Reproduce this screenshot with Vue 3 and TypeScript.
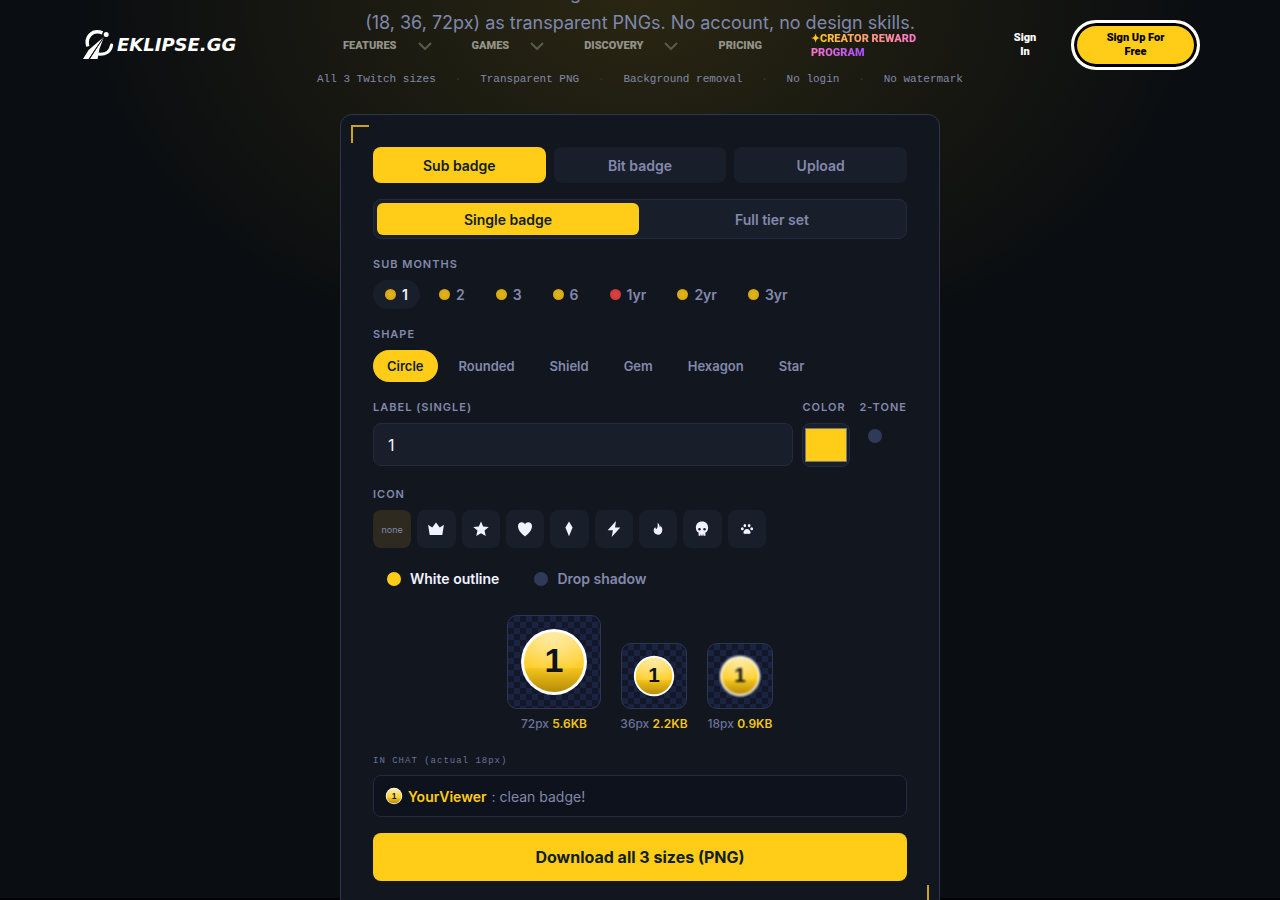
<script setup lang="ts">
import { ref } from 'vue'

interface Month { label: string; red?: boolean }
interface IconOption { name: string; path: string }
interface Preview { size: string; weight: string; kind: string }

const menus = ['FEATURES', 'GAMES', 'DISCOVERY']
const facts = ['All 3 Twitch sizes', 'Transparent PNG', 'Background removal', 'No login', 'No watermark']
const tabs = ['Sub badge', 'Bit badge', 'Upload']
const modes = ['Single badge', 'Full tier set']
const months: Month[] = [
  { label: '1' }, { label: '2' }, { label: '3' }, { label: '6' },
  { label: '1yr', red: true }, { label: '2yr' }, { label: '3yr' },
]
const shapes = ['Circle', 'Rounded', 'Shield', 'Gem', 'Hexagon', 'Star']
const icons: IconOption[] = [
  { name: 'Crown', path: 'M1.2 5.4 5.8 8.4 10 2.8 14.2 8.4 18.8 5.4 17 16.6H3Z' },
  { name: 'Star', path: 'M10 1.6 12.4 7.3 18.6 7.8 13.9 11.8 15.3 17.8 10 14.6 4.7 17.8 6.1 11.8 1.4 7.8 7.6 7.3Z' },
  { name: 'Heart', path: 'M10 18.4C6 15 2.2 11.6 2.2 6.8 2.2 4 4 2.4 6.4 2.4 8 2.4 9.4 3.2 10 4.8 10.6 3.2 12 2.4 13.6 2.4 16 2.4 17.8 4 17.8 6.8 17.8 11.6 14 15 10 18.4Z' },
  { name: 'Diamond', path: 'M10 1.8 14 8.2 10 18 6 8.2Z' },
  { name: 'Bolt', path: 'M12.2 1.2 3 11.4H8.8L7.4 18.8 17 8.4H11.2Z' },
  { name: 'Flame', path: 'M9.6 3C12 5 12 7 11.8 8.2 12.6 7.8 12.8 7 12.7 6.2 14.2 8 14.8 9.6 14.8 11 14.8 14.4 12.7 16.4 10 16.4 7.3 16.4 5.2 14.4 5.2 11.8 5.2 10 6.1 8.8 7 8 7.2 9.2 7.6 9.8 8.4 10 9.8 8.6 9.8 5.6 9.6 3Z' },
  { name: 'Skull', path: 'M10 1.8C14.4 1.8 16.8 4.8 16.8 8.6 16.8 11.8 15.4 13.2 13.8 14V17.6H11.6V16H10.8V17.6H9.2V16H8.4V17.6H6.2V14C4.6 13.2 3.2 11.8 3.2 8.6 3.2 4.8 5.6 1.8 10 1.8ZM7.2 8.8A1.5 1.5 0 1 0 7.2 11.8 1.5 1.5 0 1 0 7.2 8.8ZM12.8 8.8A1.5 1.5 0 1 0 12.8 11.8 1.5 1.5 0 1 0 12.8 8.8Z' },
  { name: 'Paw', path: 'M10 10C12.2 10 14 12.4 14 14 14 16 11.7 15.4 10 15.4 8.3 15.4 6 16 6 14 6 12.4 7.8 10 10 10ZM4.8 8A1.6 1.7 0 1 1 4.8 11.4 1.6 1.7 0 1 1 4.8 8ZM15.2 8A1.6 1.7 0 1 1 15.2 11.4 1.6 1.7 0 1 1 15.2 8ZM7.6 4.4A1.5 1.8 0 1 1 7.6 8 1.5 1.8 0 1 1 7.6 4.4ZM12.4 4.4A1.5 1.8 0 1 1 12.4 8 1.5 1.8 0 1 1 12.4 4.4Z' },
]
const previews: Preview[] = [
  { size: '72px', weight: '5.6KB', kind: 'large' },
  { size: '36px', weight: '2.2KB', kind: 'medium' },
  { size: '18px', weight: '0.9KB', kind: 'small' },
]

const tab = ref('Sub badge')
const mode = ref('Single badge')
const month = ref('1')
const shape = ref('Circle')
const icon = ref('none')
const label = ref('1')
const color = ref('#ffcd17')
const twoTone = ref(false)
const outline = ref(true)
const shadow = ref(false)
</script>

<template>
  <div class="page">
    <svg class="defs" width="0" height="0" aria-hidden="true">
      <defs>
        <linearGradient id="gold" x1="0" y1="0" x2="0" y2="1">
          <stop offset="0" stop-color="#ffe27c" />
          <stop offset=".6" stop-color="#fdce27" />
          <stop offset=".61" stop-color="#f2c31a" />
          <stop offset="1" stop-color="#b88c08" />
        </linearGradient>
        <radialGradient id="shine" cx=".5" cy=".15" r=".6">
          <stop offset="0" stop-color="#fff" stop-opacity=".35" />
          <stop offset="1" stop-color="#fff" stop-opacity="0" />
        </radialGradient>
        <symbol id="badge" viewBox="0 0 72 72">
          <circle cx="36" cy="36" r="33" fill="#fff" />
          <circle cx="36" cy="36" r="30" fill="url(#gold)" />
          <circle cx="36" cy="36" r="30" fill="url(#shine)" />
          <text class="digit" x="36" y="46" text-anchor="middle">1</text>
        </symbol>
      </defs>
    </svg>

    <header class="header">
      <a class="logo" href="#" aria-label="Eklipse.gg">
        <svg class="mark" viewBox="0 0 32 32" aria-hidden="true">
          <path d="M20.5 3.8C10 .2 3.2 8 5.8 17.4" fill="none" stroke="#fff" stroke-width="3.4" />
          <path d="M29.6 16C28.6 22.5 23.6 25.6 17.2 25.2" fill="none" stroke="#fff" stroke-width="3.2" stroke-linecap="round" />
          <circle cx="24.2" cy="5.6" r="2.5" fill="#fff" />
          <path d="M22 7.8 6.6 21 1 30H6.8L11.6 22.4Z" fill="#fff" />
          <path d="M22 7.8 14.6 19.4 8 30H15.6L17.4 20Z" fill="#fff" />
          <path d="M22 7.8 6.9 30.2" stroke="#17170f" stroke-width="1" />
        </svg>
        <span class="wordmark">EKLIPSE.GG</span>
      </a>
      <nav class="nav">
        <button v-for="m in menus" :key="m" class="menu" type="button">
          {{ m }}
          <svg viewBox="0 0 14 8" aria-hidden="true"><path d="M1 1 7 7 13 1" /></svg>
        </button>
        <a class="plain" href="#">PRICING</a>
        <a class="creator" href="#"><span>✦CREATOR REWARD PROGRAM</span></a>
      </nav>
      <a class="signin" href="#">Sign In</a>
      <a class="signup" href="#">Sign Up For Free</a>
    </header>

    <main class="main">
      <p class="intro">Create badges in all three Twitch sizes<br>(18, 36, 72px) as transparent PNGs. No account, no design skills.</p>
      <div class="facts">
        <template v-for="(f, i) in facts" :key="f">
          <span v-if="i" class="sep">·</span>
          <span>{{ f }}</span>
        </template>
      </div>

      <section class="card">
        <div class="tabs">
          <button v-for="t in tabs" :key="t" type="button" :class="{ on: tab === t }" @click="tab = t">{{ t }}</button>
        </div>
        <div class="modes">
          <button v-for="m in modes" :key="m" type="button" :class="{ on: mode === m }" @click="mode = m">{{ m }}</button>
        </div>

        <h3 class="label">SUB MONTHS</h3>
        <div class="months">
          <button v-for="m in months" :key="m.label" type="button" :class="{ on: month === m.label }" @click="month = m.label">
            <i :class="{ red: m.red }"></i>{{ m.label }}
          </button>
        </div>

        <h3 class="label">SHAPE</h3>
        <div class="shapes">
          <button v-for="s in shapes" :key="s" type="button" :class="{ on: shape === s }" @click="shape = s">{{ s }}</button>
        </div>

        <div class="fields">
          <div class="grow">
            <label class="label" for="badge-label">LABEL (SINGLE)</label>
            <input id="badge-label" v-model="label" class="text" type="text">
          </div>
          <div>
            <label class="label" for="badge-color">COLOR</label>
            <input id="badge-color" v-model="color" class="color" type="color">
          </div>
          <div>
            <label class="label" for="two-tone">2-TONE</label>
            <input id="two-tone" v-model="twoTone" class="dot lone" type="checkbox">
          </div>
        </div>

        <h3 class="label">ICON</h3>
        <div class="icons">
          <button type="button" class="none" :class="{ on: icon === 'none' }" @click="icon = 'none'">none</button>
          <button v-for="i in icons" :key="i.name" type="button" :aria-label="i.name" :class="{ on: icon === i.name }" @click="icon = i.name">
            <svg viewBox="0 0 20 20" aria-hidden="true"><path :d="i.path" fill-rule="evenodd" /></svg>
          </button>
        </div>

        <div class="toggles">
          <label :class="{ on: outline }"><input v-model="outline" class="dot" type="checkbox">White outline</label>
          <label :class="{ on: shadow }"><input v-model="shadow" class="dot" type="checkbox">Drop shadow</label>
        </div>

        <div class="previews">
          <figure v-for="p in previews" :key="p.size" :class="p.kind">
            <div class="checker"><svg aria-hidden="true"><use href="#badge" /></svg></div>
            <figcaption>{{ p.size }} <b>{{ p.weight }}</b></figcaption>
          </figure>
        </div>

        <p class="chat-label">IN CHAT (actual 18px)</p>
        <div class="chat">
          <svg aria-hidden="true"><use href="#badge" /></svg>
          <b>YourViewer</b>
          <span>: clean badge!</span>
        </div>
        <button class="download" type="button">Download all 3 sizes (PNG)</button>
      </section>
    </main>
  </div>
</template>

<style>
body { margin: 0; background: #0a0d11; }
</style>

<style scoped>
* { box-sizing: border-box; }
.page {
  position: relative;
  height: 100vh;
  overflow: hidden;
  font-family: Inter, sans-serif;
  color: #8289ab;
  background: radial-gradient(ellipse 570px 380px at 50% 0, rgba(255, 205, 23, .13), rgba(255, 205, 23, 0)) #0a0d11;
}
.page::after {
  content: '';
  position: absolute;
  inset: auto 0 0;
  height: 2px;
  background: #040108;
}
.defs { position: absolute; }
.digit { fill: #10141a; font-family: "Liberation Sans", sans-serif; font-size: 34px; font-weight: 700; }
button { border: 0; padding: 0; background: none; color: inherit; font-family: inherit; cursor: pointer; }
a { color: inherit; text-decoration: none; }

.header {
  position: absolute;
  z-index: 3;
  top: 20px;
  left: 0;
  right: 0;
  height: 50px;
  padding: 0 80px 0 82px;
  display: flex;
  align-items: center;
  font-family: Roboto, sans-serif;
  font-size: 11px;
  font-weight: 900;
  line-height: 14px;
}
.logo { width: 261px; display: flex; align-items: center; gap: 3px; color: #fff; }
.mark { width: 32px; height: 32px; }
.wordmark { font: italic 700 18px/20px "DejaVu Sans", sans-serif; }
.nav { display: flex; align-items: center; flex: 1; padding-top: 1px; color: #949389; }
.menu { display: flex; align-items: center; gap: 21px; margin-right: 40px; font-size: 11px; font-weight: 900; line-height: 14px; }
.menu svg { width: 14px; height: 8px; fill: none; stroke: #5b5a4f; stroke-width: 2; }
.plain { margin-right: 49px; }
.creator { width: 110px; }
.creator span {
  color: transparent;
  background: linear-gradient(90deg, #ffcd17, #ff74cc 65%, #a44dff);
  background-clip: text;
}
.signin { width: 30px; margin-right: 31px; color: #fff; text-align: center; }
.signup {
  width: 129px;
  height: 50px;
  padding: 8px 24px 0;
  border: 3px solid #fff;
  border-radius: 25px;
  background: #ffcd17;
  box-shadow: inset 0 0 0 3px #000;
  color: #000;
  text-align: center;
}

.main { position: relative; z-index: 1; }
.intro { margin: -22px 0 0; font-size: 18px; line-height: 30px; text-align: center; color: #7f88ad; }
.facts {
  width: 646px;
  max-width: 100%;
  margin: 33px auto 27px;
  display: flex;
  justify-content: space-between;
  font-family: "Liberation Mono", monospace;
  font-size: 11px;
  line-height: 16px;
  white-space: nowrap;
}
.sep { color: #2e3753; }

.card {
  position: relative;
  max-width: 600px;
  margin: 0 auto;
  padding: 32px;
  border: 1px solid #2d3550;
  border-radius: 12px;
  background: #12161f;
}
.card::before, .card::after {
  content: '';
  position: absolute;
  width: 16px;
  height: 16px;
  border: 0 solid #cda31c;
}
.card::before { top: 10px; left: 10px; border-width: 2px 0 0 2px; }
.card::after { bottom: 10px; right: 10px; border-width: 0 2px 2px 0; }

.tabs { display: grid; grid-template-columns: repeat(3, 1fr); gap: 8px; }
.tabs button { height: 36px; border-radius: 8px; background: #191e2b; font-size: 14px; font-weight: 600; }
.modes { margin-top: 16px; display: grid; grid-template-columns: 1fr 1fr; gap: 2px; padding: 3px; border: 1px solid #232a42; border-radius: 8px; background: #191e2b; }
.modes button { height: 32px; border-radius: 6px; font-size: 14px; font-weight: 600; }
.tabs .on, .modes .on, .shapes .on { background: #ffcd17; color: #0f2020; }

.label { display: block; margin: 0; font-size: 11px; font-weight: 600; line-height: 16px; letter-spacing: 1px; }
.modes + .label { margin-top: 17px; }
.months { margin-top: 8px; display: flex; gap: 7px; }
.months button { display: flex; align-items: center; gap: 6px; height: 29px; padding: 0 12px; border-radius: 15px; font-size: 14px; font-weight: 600; }
.months .on { background: #191e2b; color: #f0f3ff; }
.months i { width: 11px; height: 11px; border-radius: 50%; background: radial-gradient(#e3b516, #cfa313); }
.months .red { background: radial-gradient(#dd4040, #c93636); }
.months + .label { margin-top: 17px; }
.shapes { margin-top: 8px; display: flex; gap: 7px; }
.shapes button { height: 32px; padding: 0 14px; border-radius: 16px; font-size: 13px; font-weight: 600; }

.fields { margin-top: 17px; display: flex; gap: 9px; }
.grow { flex: 1; }
.text {
  display: block;
  width: 100%;
  height: 43px;
  margin-top: 8px;
  padding: 0 14px;
  border: 1px solid #232a42;
  border-radius: 8px;
  background: #191e2b;
  color: #f0f3ff;
  font: 16px Inter, sans-serif;
}
.color { display: block; width: 48px; height: 44px; margin-top: 8px; padding: 2px; border: 1px solid #232a42; border-radius: 8px; background: #191e2b; }
.color::-webkit-color-swatch-wrapper { padding: 2px 0; }
.color::-webkit-color-swatch { border: 1px solid #777; border-radius: 0; }
.dot { appearance: none; width: 14px; height: 14px; margin: 0; border-radius: 50%; background: #2f3a58; }
.dot:checked { background: #ffcd17; }
.lone { display: block; margin: 14px 0 0 9px; }
.fields + .label { margin-top: 19px; }

.icons { margin-top: 8px; width: 393px; max-width: 100%; display: grid; grid-template-columns: repeat(9, 1fr); gap: 6px; }
.icons button { display: grid; place-items: center; height: 38px; border-radius: 8px; background: #191e2b; font-size: 9px; }
.icons .on { background: #2e2a20; }
.icons svg { width: 18px; height: 18px; fill: #f0f3ff; }

.toggles { margin-top: 20px; padding-left: 14px; display: flex; gap: 35px; }
.toggles label { display: flex; align-items: center; gap: 9px; font-size: 14px; font-weight: 600; line-height: 22px; }
.toggles .on { color: #f0f3ff; }

.previews { margin-top: 25px; display: flex; justify-content: center; align-items: flex-end; gap: 20px; }
figure { margin: 0; display: flex; flex-direction: column; align-items: center; width: 66px; }
.large { width: 94px; }
.checker {
  padding: 10px;
  border: 1px solid #2d3550;
  border-radius: 10px;
  background: repeating-conic-gradient(#1a2340 0 25%, #12172a 0 50%) 0 0 / 12px 12px;
}
.checker svg { display: block; width: 44px; height: 44px; }
.large .checker svg { width: 72px; height: 72px; }
.small .checker svg { filter: blur(1px); }
figcaption { margin-top: 7px; font-size: 12px; line-height: 16px; font-weight: 500; white-space: nowrap; color: #69739a; }
figcaption b { font-weight: 600; color: #f3c41c; }

.chat-label { margin: 21px 0 0; font-family: "Liberation Mono", monospace; font-size: 9px; line-height: 16px; letter-spacing: 1px; color: #69739a; }
.chat { margin-top: 6px; height: 42px; padding: 0 11px; display: flex; align-items: center; gap: 5px; border: 1px solid #232a42; border-radius: 8px; background: #0d121c; font-size: 14px; }
.chat svg { width: 18px; height: 18px; }
.chat b { color: #ffcd17; font-weight: 600; }
.download { display: block; width: 100%; height: 48px; margin-top: 16px; border-radius: 8px; background: #ffcd17; color: #0f2020; font-size: 16px; font-weight: 700; }
</style>
